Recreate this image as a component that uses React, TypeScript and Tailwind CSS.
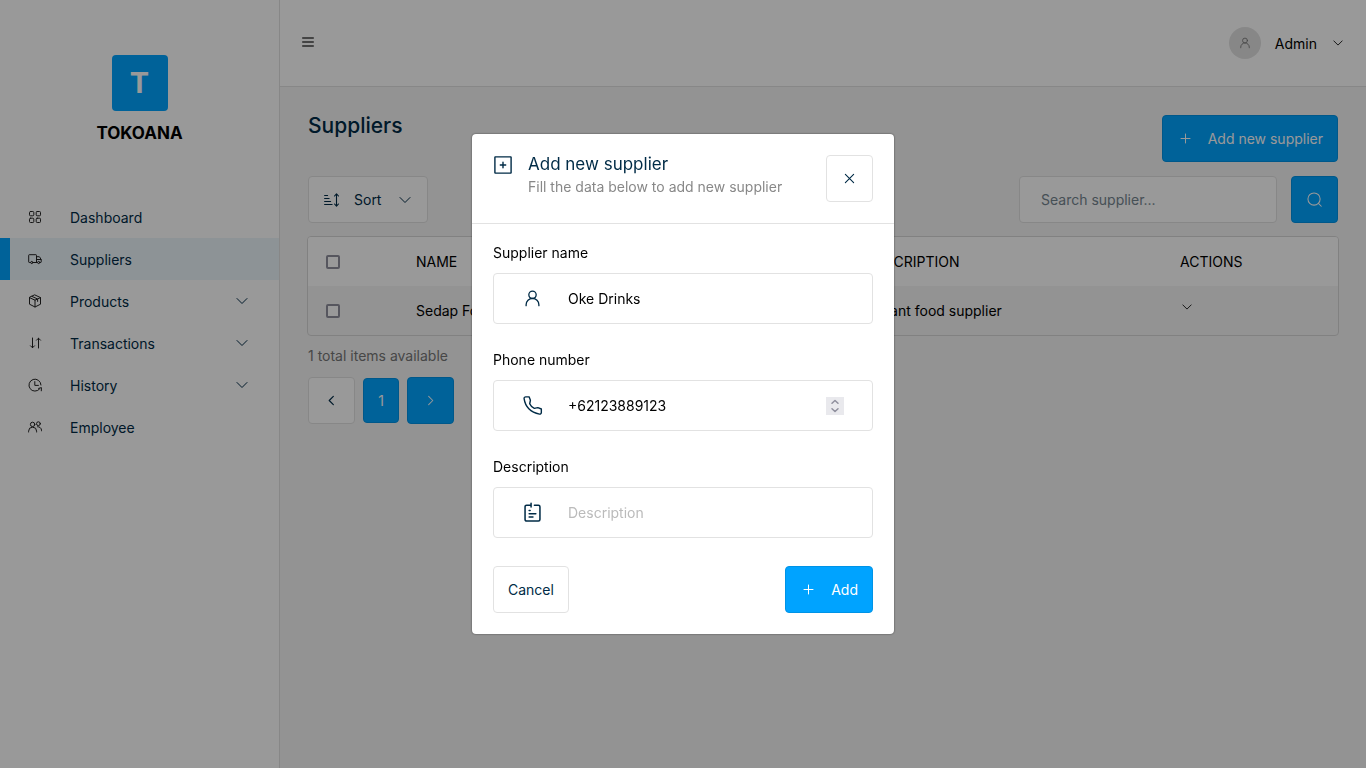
import React, { useState } from "react";

type IconProps = { className?: string; children?: React.ReactNode; box?: number; stroke?: number };

function Svg({ className = "size-4", box = 24, stroke = 1.5, children }: IconProps) {
  return (
    <svg
      className={`shrink-0 ${className}`}
      viewBox={`0 0 ${box} ${box}`}
      fill="none"
      stroke="currentColor"
      strokeWidth={stroke}
      strokeLinecap="round"
      strokeLinejoin="round"
      aria-hidden="true"
    >
      {children}
    </svg>
  );
}

const GridIcon = () => (
  <Svg className="size-3.5" box={14} stroke={1}>
    <rect x="1.5" y="1.5" width="4.3" height="4.3" rx="1" />
    <rect x="8.2" y="1.5" width="4.3" height="4.3" rx="1" />
    <rect x="1.5" y="8.2" width="4.3" height="4.3" rx="1" />
    <rect x="8.2" y="8.2" width="4.3" height="4.3" rx="1" />
  </Svg>
);

const TruckIcon = () => (
  <Svg className="size-3.5" box={14} stroke={1}>
    <path d="M2.4 10.5H1.3a.6.6 0 0 1-.6-.6V3.3a.6.6 0 0 1 .6-.6h6.6a.6.6 0 0 1 .6.6v7.2H5.2M8.5 4.7h2.6a.8.8 0 0 1 .7.5l1.4 2.6v2.1a.6.6 0 0 1-.6.6h-.4M8.5 10.5h.7M8.8 7.5h4.2" />
    <circle cx="3.8" cy="10.5" r="1.1" />
    <circle cx="10.7" cy="10.5" r="1.1" />
  </Svg>
);

const BoxIcon = () => (
  <Svg className="size-3.5" box={14} stroke={1}>
    <path d="M7 1 12.5 3.6v6.6L7 13 1.5 10.2V3.6ZM1.5 3.6 7 6.2l5.5-2.6M7 6.2V13M4 2.4l5.6 2.6v2.4" />
  </Svg>
);

const TransferIcon = () => (
  <Svg className="size-3.5" box={14} stroke={1}>
    <path d="M4.5 2v9.6M2.500 9.800l2 2 2-2M10.500 12V2.200M8.500 4.200l2-2 2 2" />
  </Svg>
);

const HistoryIcon = () => (
  <Svg className="size-3.5" box={14} stroke={1}>
    <path d="M11.700 10.900A6 6 0 1 1 13 7M6.800 3.600v3.800h3.600M13.300 12.800l.1-3.200-2.800.8" />
  </Svg>
);

const UsersIcon = () => (
  <Svg className="size-3.5" box={14} stroke={1}>
    <circle cx="4.6" cy="4.4" r="2.2" />
    <path d="M.6 12v-.8a4 4 0 0 1 8 0v.8M9.6 6.7a3.6 3.6 0 0 1 3.9 3.5v.6" />
    <circle cx="10.4" cy="3.7" r="1.9" />
  </Svg>
);

const UserIcon = ({ className = "size-[21px]" }: { className?: string }) => (
  <Svg className={className}>
    <circle cx="12" cy="7.800" r="4.200" />
    <path d="M4.700 20.200v-1a7.300 7.300 0 0 1 14.600 0v1" />
  </Svg>
);

const PhoneIcon = () => (
  <Svg className="size-[21px]" stroke={1.6}>
    <path d="m18.1 14.5-4 .8c-2.7-1.4-4.3-2.9-5.3-5.3l.8-4L8.100 2.100H4.300c-1.200 0-2.100 1-1.900 2.100.400 2.800 1.700 7.800 5.400 11.500 3.800 3.800 9.200 5.500 12.200 6.100 1.100.2 2.100-.7 2.100-1.800V16Z" />
  </Svg>
);

const NoteIcon = () => (
  <Svg className="size-[21px]" box={22} stroke={1.6}>
    <path d="M13 3.300h4.200a1.600 1.600 0 0 1 1.600 1.600v13.500a1.600 1.600 0 0 1-1.600 1.600H4.800a1.600 1.600 0 0 1-1.600-1.600V4.900a1.600 1.600 0 0 1 1.600-1.600H9.500V1.300M9.500 3.300v2M7.500 8.800h1M7.500 12.300h7M7.500 15.600h4" />
  </Svg>
);

const AddSquareIcon = () => (
  <Svg className="size-[18px]" box={18} stroke={1.4}>
    <rect x="0.9" y="0.9" width="16.200" height="16.200" rx="0.4" />
    <path d="M9 6.300v5.400M6.300 9h5.400" />
  </Svg>
);

const Chevron = ({ className = "size-3" }: { className?: string }) => (
  <Svg className={className} box={12} stroke={1}>
    <path d="m1 3.500 5 5 5-5" />
  </Svg>
);

const PlusIcon = () => (
  <Svg className="size-[11px]" box={11} stroke={1}>
    <path d="M5.500 1v9M1 5.500h9" />
  </Svg>
);

const SortIcon = () => (
  <Svg className="size-4" box={16} stroke={1.1}>
    <path d="M.6 3.500h3M.6 6.500h4.500M.6 9.500h6M.6 12.500h7.500M12.500 2v12M10.500 4l2-2.200 2 2.200M10.500 12l2 2.200 2-2.200" />
  </Svg>
);

const button = "flex h-[47px] cursor-pointer items-center justify-center rounded border";
const light = "border-[#e2e2e2] bg-white text-[#002b46]";
const blue = "border-[#0093e6] bg-[#00a3ff] text-white";

const links = [
  { label: "Dashboard", icon: <GridIcon /> },
  { label: "Suppliers", icon: <TruckIcon />, active: true },
  { label: "Products", icon: <BoxIcon />, more: true },
  { label: "Transactions", icon: <TransferIcon />, more: true },
  { label: "History", icon: <HistoryIcon />, more: true },
  { label: "Employee", icon: <UsersIcon /> },
];

function Sidebar() {
  return (
    <aside className="w-[280px] shrink-0 border-r border-[#e2e2e2] bg-white pt-[55px]">
      <div className="flex flex-col items-center">
        <div className="flex size-14 items-center justify-center rounded bg-[#00a3ff] text-[29px] font-bold text-white">T</div>
        <p className="mt-2.5 text-[17px] leading-6 font-bold text-black">TOKOANA</p>
      </div>
      <nav className="mt-[51px]">
        {links.map((l) => (
          <a
            key={l.label}
            href="#"
            className={`flex h-[42px] items-center border-l-[10px] pr-[31px] pl-[18px] text-[#002b46] ${
              l.active ? "border-[#00a3ff] bg-[#ecf5fb]" : "border-transparent"
            }`}
          >
            <span className="text-[#222]">{l.icon}</span>
            <span className="ml-7 flex-1 pt-0.5">{l.label}</span>
            {l.more && <Chevron />}
          </a>
        ))}
      </nav>
    </aside>
  );
}

function Header() {
  return (
    <header className="flex h-[87px] items-center justify-between border-b border-[#e2e2e2] bg-white pr-[23px] pl-[22px]">
      <button aria-label="Toggle menu" className="pb-0.5 text-[#444]">
        <Svg className="size-3" box={12} stroke={1.4}>
          <path d="M.700 2h10.600M.700 6h10.600M.700 10h10.600" />
        </Svg>
      </button>
      <button className="flex items-center text-black">
        <span className="mr-3.5 flex size-8 items-center justify-center rounded-full bg-[#e2e2e2] text-[#777]">
          <UserIcon className="size-3.5" />
        </span>
        <span className="pt-0.5">Admin</span>
        <span className="ml-4">
          <Chevron className="size-2.5" />
        </span>
      </button>
    </header>
  );
}

const check = "block size-3.5 appearance-none rounded-[2px] border-2 border-[#8f8f9d] bg-white";

function SuppliersTable() {
  return (
    <div className="-mx-px mt-[13px] overflow-hidden rounded border border-[#d8d8d8]">
      <table className="w-full table-fixed text-left text-black">
        <colgroup>
          <col className="w-[93px]" />
          <col className="w-[236px]" />
          <col className="w-[214px]" />
          <col className="w-[314px]" />
          <col />
        </colgroup>
        <thead className="bg-white">
          <tr className="h-[49px]">
            <th className="pl-[18px]"><input type="checkbox" aria-label="Select all" className={check} /></th>
            <th className="pl-[15px] font-normal">NAME</th>
            <th className="pl-[15px] font-normal">PHONE</th>
            <th className="pl-[15px] font-normal">DESCRIPTION</th>
            <th className="pl-[15px] font-normal">ACTIONS</th>
          </tr>
        </thead>
        <tbody>
          <tr className="h-[49px]">
            <td className="pl-[18px]"><input type="checkbox" aria-label="Select Sedap Food" className={check} /></td>
            <td className="pl-[15px]">Sedap Food</td>
            <td className="pl-[15px]">+62</td>
            <td className="pl-[15px]">Instant food supplier</td>
            <td className="pb-2 pl-[17px]">
              <button aria-label="Row actions" className="block"><Chevron className="size-2.5" /></button>
            </td>
          </tr>
        </tbody>
      </table>
    </div>
  );
}

type FieldProps = { id: string; label: string; icon: React.ReactNode; children: React.ReactNode };

function Field({ id, label, icon, children }: FieldProps) {
  return (
    <div>
      <label htmlFor={id} className="block leading-5 text-black">{label}</label>
      <div className="mt-2.5 flex h-[51px] items-center rounded border border-[#e2e2e2] pr-7 pl-7 text-[#002b46]">
        {icon}
        {children}
      </div>
    </div>
  );
}

const inputStyle = "ml-[25px] min-w-0 flex-1 bg-transparent text-black outline-none placeholder:text-[#bbb]";

function SupplierDialog() {
  const [name, setName] = useState("Oke Drinks");
  const [phone, setPhone] = useState("+62123889123");
  const [description, setDescription] = useState("");
  return (
    <div className="fixed inset-0 flex items-center justify-center bg-black/40">
      <form
        role="dialog"
        aria-labelledby="dialog-title"
        onSubmit={(e) => e.preventDefault()}
        className="w-[422px] rounded bg-white shadow-[0_0_2px_rgba(0,0,0,0.6)]"
      >
        <div className="flex items-start border-b border-[#e2e2e2] p-[21px]">
          <span className="mt-px ml-px text-[#002b46]"><AddSquareIcon /></span>
          <div className="ml-4 flex-1">
            <h2 id="dialog-title" className="text-[17px] leading-[18px] text-[#002b46]">Add new supplier</h2>
            <p className="mt-1 leading-5 text-[#888]">Fill the data below to add new supplier</p>
          </div>
          <button type="button" aria-label="Close" className={`${button} ${light} w-[47px]`}>
            <Svg className="size-[11px]" box={12} stroke={1.2}><path d="m1.500 1.500 9 9M10.500 1.500l-9 9" /></Svg>
          </button>
        </div>
        <div className="flex flex-col gap-[26px] px-[21px] pt-[19px] pb-7">
          <Field id="name" label="Supplier name" icon={<UserIcon />}>
            <input id="name" className={inputStyle} value={name} onChange={(e) => setName(e.target.value)} />
          </Field>
          <Field id="phone" label="Phone number" icon={<PhoneIcon />}>
            <input id="phone" inputMode="tel" className={inputStyle} value={phone} onChange={(e) => setPhone(e.target.value)} />
            <button type="button" aria-label="Step value" className="flex size-[18px] items-center justify-center bg-[#e9e9ed] text-[#8f8f9d]">
              <Svg className="size-[18px]" box={18} stroke={1.5}><path d="m6 6.300 3-2.800 3 2.800M6 11.700l3 2.800 3-2.800" /></Svg>
            </button>
          </Field>
          <Field id="description" label="Description" icon={<NoteIcon />}>
            <input id="description" placeholder="Description" className={inputStyle} value={description} onChange={(e) => setDescription(e.target.value)} />
          </Field>
        </div>
        <div className="flex justify-between px-[21px] pb-[21px]">
          <button type="button" className={`${button} ${light} px-3.5`}>Cancel</button>
          <button type="submit" className={`${button} ${blue} gap-[17px] pr-3.5 pl-[17px]`}><PlusIcon />Add</button>
        </div>
      </form>
    </div>
  );
}

export default function App() {
  return (
    <div className="flex min-h-screen bg-[#f5f5f5] font-['Inter',sans-serif] text-sm">
      <Sidebar />
      <div className="min-w-0 flex-1">
        <Header />
        <main className="p-7">
          <div className="flex items-start justify-between">
            <h1 className="text-[21px] leading-[22px] font-medium text-[#002b46]">Suppliers</h1>
            <button className={`${button} ${blue} gap-[17px] pr-3.5 pl-[17px]`}><PlusIcon />Add new supplier</button>
          </div>
          <div className="mt-3.5 flex items-center justify-between">
            <button className={`${button} ${light} pr-4 pl-[15px]`}>
              <SortIcon />
              <span className="mr-[18px] ml-3.5">Sort</span>
              <Chevron />
            </button>
            <form className="flex gap-3.5" onSubmit={(e) => e.preventDefault()}>
              <input
                aria-label="Search supplier"
                placeholder="Search supplier..."
                className="h-[47px] w-[258px] rounded border border-[#e2e2e2] bg-white px-[21px] placeholder:text-[#75858f]"
              />
              <button aria-label="Search" className={`${button} ${blue} w-[47px]`}>
                <Svg className="size-[15px]" box={16} stroke={1.1}><circle cx="7.500" cy="7.500" r="6.500" /><path d="m12.200 12.200 3 3" /></Svg>
              </button>
            </form>
          </div>
          <SuppliersTable />
          <p className="mt-2.5 leading-5 text-[#777]">1 total items available</p>
          <div className="mt-[11px] flex items-center gap-2">
            <button aria-label="Previous page" className={`${button} ${light} w-[47px]`}>
              <Svg className="size-[11px]" box={12} stroke={1.3}><path d="M8 1.500 3.500 6 8 10.500" /></Svg>
            </button>
            <button className="h-[45px] w-9 rounded border border-[#0093e6] bg-[#00a3ff] text-white">1</button>
            <button aria-label="Next page" className={`${button} ${blue} w-[47px]`}>
              <Svg className="size-[11px]" box={12} stroke={1.1}><path d="M4 1.500 8.500 6 4 10.500" /></Svg>
            </button>
          </div>
        </main>
      </div>
      <SupplierDialog />
    </div>
  );
}
